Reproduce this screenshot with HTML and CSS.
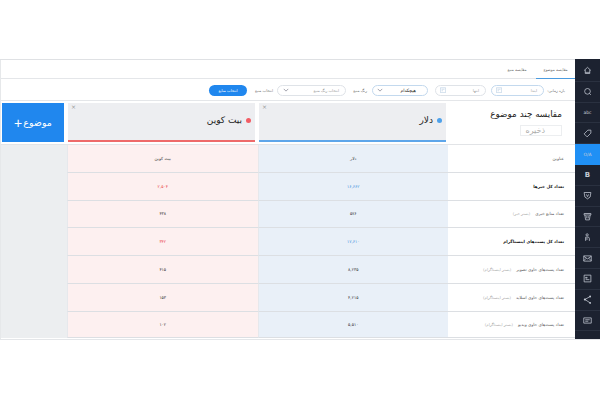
FILE: index.html
```html
<!DOCTYPE html>
<html lang="fa" dir="rtl">
<head>
    <meta charset="UTF-8">
    <title>مقایسه موضوع</title>
    <link rel="stylesheet" href="styles.css">
</head>
<body>
<div class="page">
    <div class="side">
        <a class="side-item"><svg viewBox="0 0 12 12"><path d="M1.500 6 6 1.800 10.500 6M3 5v5h6V5M3 8.500h6"/></svg></a>
        <a class="side-item"><svg viewBox="0 0 12 12"><circle cx="6" cy="5.800" r="3.800"/><path d="m8.500 8.500 2 2"/></svg></a>
        <a class="side-item"><span class="side-txt" dir="ltr">abc</span></a>
        <a class="side-item"><svg viewBox="0 0 12 12"><path d="M6.500 1.500h4v4L5.500 10.500l-4-4zM8.500 3.500h0"/></svg></a>
        <a class="side-item on"><span class="side-txt" dir="ltr">O/A</span></a>
        <a class="side-item"><span class="side-txt side-b" dir="ltr">B</span></a>
        <a class="side-item"><svg viewBox="0 0 12 12"><path d="M1.500 2h9l-1 6L6 10.500 2.500 8zM4.500 4.500 6 7.500l1.500-3"/></svg></a>
        <a class="side-item"><svg viewBox="0 0 12 12"><path d="M1.500 2h9v2h-9zM2.500 4l1 6.500h5l1-6.500M5 5.500v3M7 5.500v3"/></svg></a>
        <a class="side-item"><svg viewBox="0 0 12 12"><circle cx="5.500" cy="2.500" r="1.500"/><path d="M3.500 10.500V5.500h4l1 2v3M3.500 8h3"/></svg></a>
        <a class="side-item"><svg viewBox="0 0 12 12"><path d="M1 2.500h10v7H1zM1 3l5 3.500L11 3M1 9l3.500-3.500M11 9 7.500 5.500"/></svg></a>
        <a class="side-item"><svg viewBox="0 0 12 12"><path d="M1.500 1.500h9v9h-9zM3.500 7.500h5M3.500 4.500h2v1h-2z"/></svg></a>
        <a class="side-item"><svg viewBox="0 0 12 12"><path d="M2.500 6 9.500 2M2.500 6l7 4.500"/><circle class="fill" cx="2.500" cy="6" r="1.400"/><circle class="fill" cx="9.500" cy="2" r="1.200"/><circle class="fill" cx="9.500" cy="10.500" r="1.200"/></svg></a>
        <a class="side-item"><svg viewBox="0 0 12 12"><path d="M1 2.500h10v7H1zM3 5h6M3 7h4"/></svg></a>
    </div>

    <div class="main">
        <div class="tabs">
            <a class="tab active">مقایسه موضوع</a>
            <a class="tab">مقایسه منبع</a>
        </div>

        <div class="filters">
            <span class="lbl lbl-time">بازه زمانی:</span>
            <div class="pill pill-from"><span>ابتدا</span><svg class="cal" viewBox="0 0 8 8"><path d="M.5 1h7v6.500h-7zM2 3h4M2 5h2"/></svg></div>
            <div class="pill pill-to"><span>انتها</span><svg class="cal" viewBox="0 0 8 8"><path d="M.5 1h7v6.500h-7zM2 3h4M2 5h2"/></svg></div>
            <div class="pill pill-none"><b>هیچکدام</b><svg class="chev" viewBox="0 0 8 8"><path d="m1 2.500 3 3 3-3"/></svg></div>
            <span class="lbl lbl-color">رنگ منبع</span>
            <div class="pill pill-pick"><span>انتخاب رنگ منبع</span><svg class="chev" viewBox="0 0 8 8"><path d="m1 2.500 3 3 3-3"/></svg></div>
            <span class="lbl lbl-src">انتخاب منبع</span>
            <button class="btn">انتخاب منابع</button>
        </div>

        <div class="heads">
            <div class="title-box">
                <h1>مقایسه چند موضوع</h1>
                <div class="save">ذخیره</div>
            </div>
            <div class="head head-blue"><i class="x">×</i><em class="dot"></em><span>دلار</span></div>
            <div class="head head-red"><i class="x">×</i><em class="dot"></em><span>بیت کوین</span></div>
            <div class="add">موضوع<span class="plus">+</span></div>
        </div>

        <div class="table">
            <div class="row">
                <div class="cell-label">عناوین</div>
                <div class="cell blue">دلار</div>
                <div class="cell red">بیت کوین</div>
                <div class="cell-empty"></div>
            </div>
            <div class="row">
                <div class="cell-label strong">تعداد کل خبرها</div>
                <div class="cell blue num-b">۱۶,۶۶۲</div>
                <div class="cell red num-r">۲,۵۰۴</div>
                <div class="cell-empty"></div>
            </div>
            <div class="row">
                <div class="cell-label">تعداد منابع خبری <small>(بستر خبر)</small></div>
                <div class="cell blue">۵۷۶</div>
                <div class="cell red">۴۳۸</div>
                <div class="cell-empty"></div>
            </div>
            <div class="row">
                <div class="cell-label strong">تعداد کل پست‌های اینستاگرام</div>
                <div class="cell blue num-b">۱۷,۶۱۰</div>
                <div class="cell red num-r">۳۴۲</div>
                <div class="cell-empty"></div>
            </div>
            <div class="row">
                <div class="cell-label">تعداد پست‌های حاوی تصویر <small>(بستر اینستاگرام)</small></div>
                <div class="cell blue">۸,۲۳۵</div>
                <div class="cell red">۴۱۵</div>
                <div class="cell-empty"></div>
            </div>
            <div class="row">
                <div class="cell-label">تعداد پست‌های حاوی اسلاید <small>(بستر اینستاگرام)</small></div>
                <div class="cell blue">۴,۲۱۵</div>
                <div class="cell red">۱۵۳</div>
                <div class="cell-empty"></div>
            </div>
            <div class="row">
                <div class="cell-label">تعداد پست‌های حاوی ویدیو <small>(بستر اینستاگرام)</small></div>
                <div class="cell blue">۵,۵۱۰</div>
                <div class="cell red">۱۰۲</div>
                <div class="cell-empty"></div>
            </div>
        </div>
    </div>
</div>
</body>
</html>
```

FILE: styles.css
```css
html,body{margin:0;padding:0;background:#fff;}
body{font-family:"DejaVu Sans","Noto Sans",sans-serif;color:#333;}
*{box-sizing:border-box;}

.page{display:flex;width:600px;height:281px;margin-top:59px;border-top:1px solid #dfe1e4;border-bottom:1px solid #e4e6e9;}

/* sidebar */
.side{width:25px;flex:none;background:#1c2230;padding-top:2px;margin-top:-1px;}
.side-item{display:flex;align-items:center;justify-content:center;height:20.800px;border-bottom:1px solid #2a3140;}
.side-item svg{width:9px;height:9px;fill:none;stroke:#c5cbd5;stroke-width:1;}
.side-item svg .fill{fill:#c5cbd5;stroke:none;}
.side-item.on{background:#2090f5;border-bottom-color:#2090f5;}
.side-txt{font-size:4.500px;color:#c5cbd5;}
.side-b{font-size:7px;font-weight:bold;}

.main{flex:1;min-width:0;display:flex;flex-direction:column;border-left:1px solid #e6e8ea;}

/* tabs */
.tabs{display:flex;height:19px;border-bottom:1px solid #e4e6e9;font-size:3.800px;color:#666;}
.tab{display:flex;align-items:center;justify-content:center;height:19px;}
.tab.active{width:39px;border-bottom:1px solid #4a9be0;}
.tab:not(.active){width:38px;}

/* filters */
.filters{display:flex;align-items:center;height:22px;border-bottom:1px solid #e4e6e9;padding-top:1px;font-size:3.800px;color:#777;}
.lbl{white-space:nowrap;flex:none;}
.lbl-time{width:31px;padding-right:10px;}
.lbl-color{width:26px;padding-right:5px;}
.lbl-src{width:30px;padding-right:4px;}
.pill{display:flex;align-items:center;justify-content:space-between;flex:none;height:11px;border:1px solid #dfe3e8;border-radius:6px;padding:0 6px 0 4px;background:#fff;color:#999;}
.pill-from{width:53px;border-color:#c3d9ee;margin-left:5px;}
.pill-to{width:51px;margin-left:7px;}
.pill-none{width:56px;border-color:#c3d9ee;color:#222;padding-right:11px;padding-left:4px;}
.pill-pick{width:69px;padding-left:5px;}
.pill b{font-weight:normal;font-size:4.500px;}
.cal{width:6px;height:6px;fill:none;stroke:#a9c4dd;stroke-width:.7;}
.chev{width:6px;height:6px;fill:none;stroke:#667;stroke-width:.8;}
.btn{width:38px;height:11px;flex:none;padding:0;border:0;border-radius:6px;background:#2087ee;color:#fff;font:3.800px "DejaVu Sans",sans-serif;}

/* column heads */
.heads{display:flex;height:43px;padding-top:2px;}
.title-box{width:127px;flex:none;padding:5px 13px 0 12px;}
.title-box h1{margin:0 0 4px;font-size:8.800px;line-height:13px;font-weight:normal;color:#222;white-space:nowrap;}
.save{width:42px;height:11px;padding-right:16px;border:1px solid #eceef0;font-size:8px;line-height:9px;color:#aaa;}
.head{position:relative;width:187px;height:39px;margin-left:4px;flex:none;display:flex;align-items:center;gap:4px;padding:0 4px 3px 0;background:#edeef1;font-size:9px;color:#222;border-bottom:2px solid;}
.head-blue{margin-right:2px;border-color:#5ea6ea;}
.head-blue .dot{background:#4ea1ea;}
.head-blue::after{border-bottom-color:#5ea6ea;}
.head-red{border-color:#ee6a6a;}
.head-red .dot{background:#f25c64;}
.head-red::after{border-bottom-color:#ee6a6a;}
.head::after{content:"";position:absolute;bottom:0;left:50%;margin-left:-4px;border:4px solid transparent;border-top:0;border-bottom-width:4px;border-bottom-style:solid;}
.dot{width:5px;height:5px;border-radius:50%;flex:none;}
.x{position:absolute;top:1px;left:3px;font-size:6px;line-height:6px;font-style:normal;color:#999;}
.add{width:62px;height:39px;flex:none;display:flex;align-items:center;justify-content:center;gap:1px;background:#2087ee;color:#fff;font-size:9.500px;}
.plus{font:300 14px/14px "Liberation Sans",sans-serif;}

/* comparison table */
.table{flex:1;display:flex;flex-direction:column;border-top:1px solid #e2e4e7;}
.row{display:flex;height:27.800px;font-size:4.200px;}
.row:last-child{height:26.600px;}
.cell-label{width:127px;flex:none;display:flex;align-items:center;gap:5px;padding-right:11px;border-bottom:1px solid #dcdfe3;color:#555;white-space:nowrap;}
.cell-label.strong{color:#111;font-weight:bold;}
.cell-label small{font-size:3.800px;color:#aaa;}
.cell{width:190.500px;flex:none;display:flex;align-items:center;justify-content:center;border-bottom:1px solid #dcdfe3;border-left:1px solid #e6e8ec;}
.cell.blue{background:#e9f0f8;}
.cell.red{background:#fdf0f0;}
.num-b{color:#3b8fdc;}
.num-r{color:#ea3b42;}
.cell-empty{flex:1;background:#eceef0;}
```
